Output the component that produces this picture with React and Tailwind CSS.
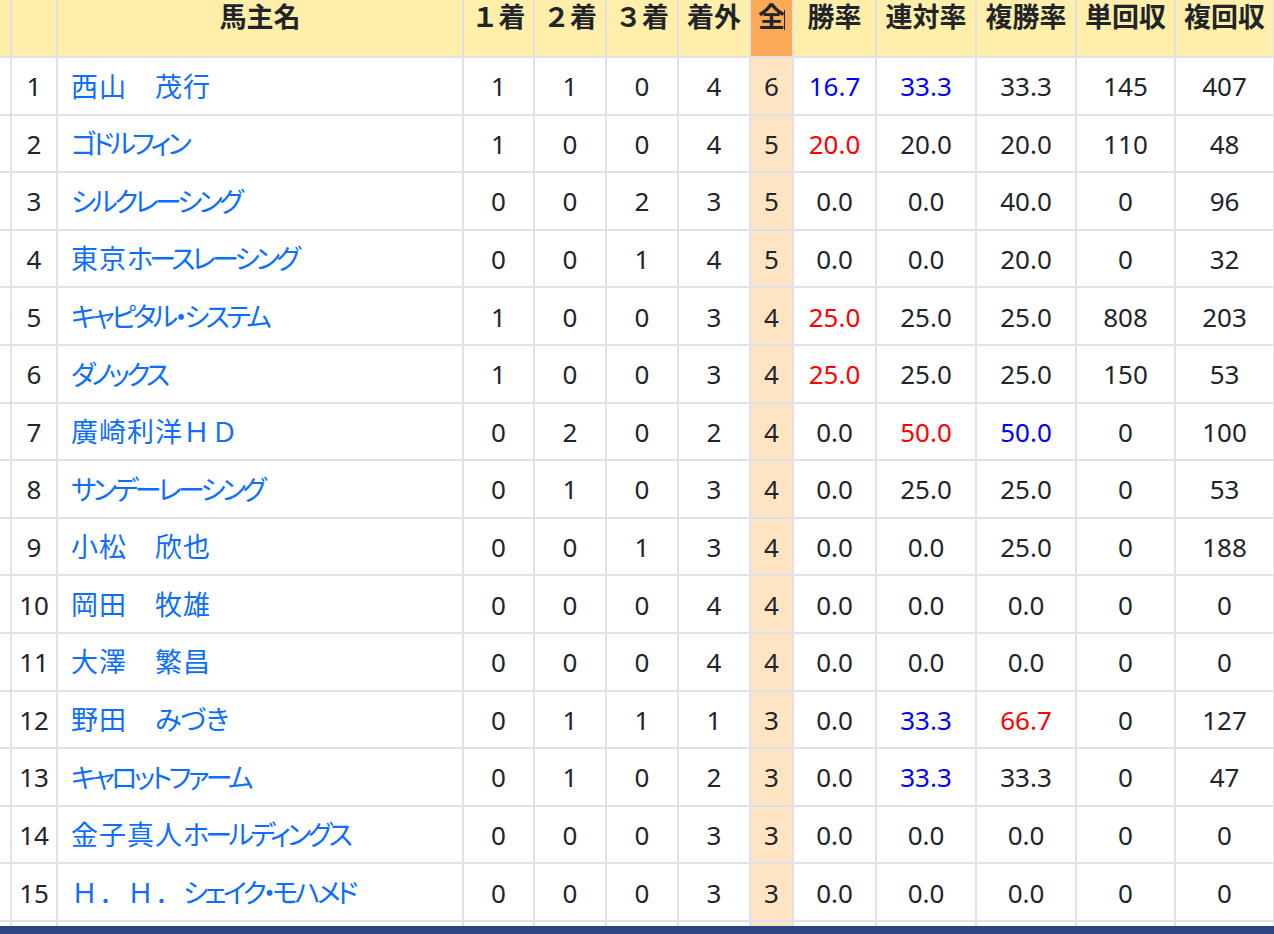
import React from 'react';

const heads = ['馬主名', '１着', '２着', '３着', '着外', '全', '勝率', '連対率', '複勝率', '単回収', '複回収'];

const B = 'text-[#0000ff]';
const R = 'text-[#ff0000]';

// [no, name, 1着, 2着, 3着, 着外, 全, [勝率, color], [連対率, color], [複勝率, color], 単回収, 複回収]
const rows = [
    [1, '西山　茂行', 1, 1, 0, 4, 6, ['16.7', B], ['33.3', B], ['33.3'], 145, 407],
    [2, 'ゴドルフィン', 1, 0, 0, 4, 5, ['20.0', R], ['20.0'], ['20.0'], 110, 48],
    [3, 'シルクレーシング', 0, 0, 2, 3, 5, ['0.0'], ['0.0'], ['40.0'], 0, 96],
    [4, '東京ホースレーシング', 0, 0, 1, 4, 5, ['0.0'], ['0.0'], ['20.0'], 0, 32],
    [5, 'キャピタル・システム', 1, 0, 0, 3, 4, ['25.0', R], ['25.0'], ['25.0'], 808, 203],
    [6, 'ダノックス', 1, 0, 0, 3, 4, ['25.0', R], ['25.0'], ['25.0'], 150, 53],
    [7, '廣崎利洋ＨＤ', 0, 2, 0, 2, 4, ['0.0'], ['50.0', R], ['50.0', B], 0, 100],
    [8, 'サンデーレーシング', 0, 1, 0, 3, 4, ['0.0'], ['25.0'], ['25.0'], 0, 53],
    [9, '小松　欣也', 0, 0, 1, 3, 4, ['0.0'], ['0.0'], ['25.0'], 0, 188],
    [10, '岡田　牧雄', 0, 0, 0, 4, 4, ['0.0'], ['0.0'], ['0.0'], 0, 0],
    [11, '大澤　繁昌', 0, 0, 0, 4, 4, ['0.0'], ['0.0'], ['0.0'], 0, 0],
    [12, '野田　みづき', 0, 1, 1, 1, 3, ['0.0'], ['33.3', B], ['66.7', R], 0, 127],
    [13, 'キャロットファーム', 0, 1, 0, 2, 3, ['0.0'], ['33.3', B], ['33.3'], 0, 47],
    [14, '金子真人ホールディングス', 0, 0, 0, 3, 3, ['0.0'], ['0.0'], ['0.0'], 0, 0],
    [15, 'Ｈ．Ｈ．シェイク・モハメド', 0, 0, 0, 3, 3, ['0.0'], ['0.0'], ['0.0'], 0, 0],
];

const grid = 'grid grid-cols-[10px_46px_406px_71px_72px_72px_72px_43px_83px_100px_100px_99px_101px]';
const cell = 'border-l-2 border-b-2 border-[#dee2e6] flex items-center justify-center pt-[2px]';

// かなは詰めて、漢字・全角英字はそのまま
const Name = ({ text }) => {
    const parts = text.match(/[\u30A0-\u30FF]+|[\u3041-\u309F]+|[^\u3041-\u30FF]+/g) || [];
    return (
        <span className="whitespace-nowrap">
            {parts.map((p, i) => {
                if (/[\u30A0-\u30FF]/.test(p)) {
                    return <span key={i} className="[font-feature-settings:'palt'] tracking-[-3.6px]">{p}</span>;
                }
                if (/[\u3041-\u309F]/.test(p)) {
                    return <span key={i} className="[font-feature-settings:'palt'] tracking-[-1px]">{p}</span>;
                }
                return <span key={i} className="tracking-[1px]">{p}</span>;
            })}
        </span>
    );
};

export default function App() {
    return (
        <div className="w-[1274px] h-[934px] overflow-hidden bg-white flex flex-col font-['Noto_Sans','Noto_Sans_CJK_JP',sans-serif] text-[#212529]">
            {/* 見出し */}
            <div className={`${grid} h-[58px] shrink-0 bg-[#ffefaa] text-[27px] font-bold leading-[34px]`}>
                <div className="border-b-2 border-[#dee2e6]" />
                <div className="border-l-2 border-b-2 border-[#dee2e6]" />
                {heads.map((h) => (
                    <div
                        key={h}
                        className={`border-l-2 border-b-2 border-[#dee2e6] flex justify-center items-start ${h === '全' ? 'bg-[#faaa55]' : ''} ${h === '複回収' ? 'border-r-2' : ''}`}
                    >
                        {h === '全' ? (
                            <span className="relative">
                                全
                                <span className="absolute left-[26px] top-[10px] w-[1px] h-[20px] bg-[#222]" />
                            </span>
                        ) : h}
                    </div>
                ))}
            </div>

            {rows.map((r) => (
                <div key={r[0]} className={`${grid} h-[57.6px] text-[26px] shrink-0`}>
                    <div className="border-b-2 border-[#dee2e6]" />
                    <div className={cell}>{r[0]}</div>
                    <div className="border-l-2 border-b-2 border-[#dee2e6] flex items-center pt-[2px] pl-[13px] text-[27px] text-[#0d6efd]">
                        <Name text={r[1]} />
                    </div>
                    <div className={cell}>{r[2]}</div>
                    <div className={cell}>{r[3]}</div>
                    <div className={cell}>{r[4]}</div>
                    <div className={cell}>{r[5]}</div>
                    <div className={`${cell} bg-[#ffe4c4]`}>{r[6]}</div>
                    <div className={`${cell} ${r[7][1] || ''}`}>{r[7][0]}</div>
                    <div className={`${cell} ${r[8][1] || ''}`}>{r[8][0]}</div>
                    <div className={`${cell} ${r[9][1] || ''}`}>{r[9][0]}</div>
                    <div className={cell}>{r[10]}</div>
                    <div className={`${cell} border-r-2`}>{r[11]}</div>
                </div>
            ))}

            {/* 次の行の端 */}
            <div className={`${grid} h-[4px] shrink-0`}>
                <div />
                <div className="border-l-2 border-[#dee2e6]" />
                <div className="border-l-2 border-[#dee2e6]" />
                <div className="border-l-2 border-[#dee2e6]" />
                <div className="border-l-2 border-[#dee2e6]" />
                <div className="border-l-2 border-[#dee2e6]" />
                <div className="border-l-2 border-[#dee2e6]" />
                <div className="border-l-2 border-[#dee2e6] bg-[#ffe4c4]" />
                <div className="border-l-2 border-[#dee2e6]" />
                <div className="border-l-2 border-[#dee2e6]" />
                <div className="border-l-2 border-[#dee2e6]" />
                <div className="border-l-2 border-[#dee2e6]" />
                <div className="border-l-2 border-r-2 border-[#dee2e6]" />
            </div>

            <div className="h-[8px] shrink-0 bg-[#2b4482]" />
        </div>
    );
}
